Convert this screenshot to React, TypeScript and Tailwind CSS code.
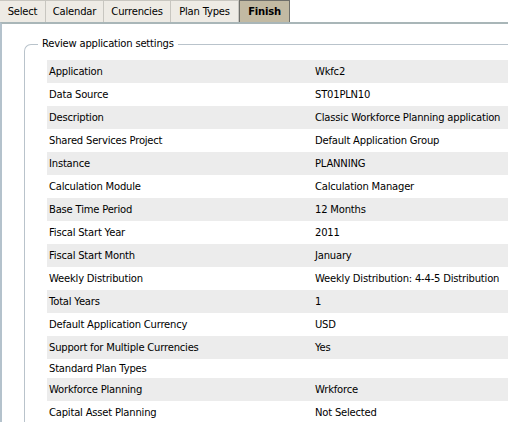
const tabs = [
  { label: 'Select', w: 'w-[46px]' },
  { label: 'Calendar', w: 'w-[58px]' },
  { label: 'Currencies', w: 'w-[67px]' },
  { label: 'Plan Types', w: 'w-[68px]' },
];

type Row = { label: string; value: string; short?: boolean };

const rows: Row[] = [
  { label: 'Application', value: 'Wkfc2' },
  { label: 'Data Source', value: 'ST01PLN10' },
  { label: 'Description', value: 'Classic Workforce Planning application' },
  { label: 'Shared Services Project', value: 'Default Application Group' },
  { label: 'Instance', value: 'PLANNING' },
  { label: 'Calculation Module', value: 'Calculation Manager' },
  { label: 'Base Time Period', value: '12 Months' },
  { label: 'Fiscal Start Year', value: '2011' },
  { label: 'Fiscal Start Month', value: 'January' },
  { label: 'Weekly Distribution', value: 'Weekly Distribution: 4-4-5 Distribution' },
  { label: 'Total Years', value: '1' },
  { label: 'Default Application Currency', value: 'USD' },
  { label: 'Support for Multiple Currencies', value: 'Yes' },
  { label: 'Standard Plan Types', value: '', short: true },
  { label: 'Workforce Planning', value: 'Wrkforce' },
  { label: 'Capital Asset Planning', value: 'Not Selected' },
];

export default function App() {
  return (
    <div className="h-[422px] w-[508px] overflow-hidden bg-white text-[10px] tracking-[-0.2px] text-black [font-family:'DejaVu_Sans',sans-serif]">
      <div className="flex h-[22px]">
        {tabs.map((t) => (
          <div
            key={t.label}
            className={`${t.w} flex items-center justify-center border-r border-t border-[#c8c6c0] bg-[#eeebe5]`}
          >
            {t.label}
          </div>
        ))}
        <div className="flex w-[51px] items-center justify-center border border-b-0 border-[#6f6f6a] bg-[#c2baa3] font-bold">
          Finish
        </div>
      </div>
      <div className="h-full border-l-2 border-t-2 border-l-[#b4c2cc] border-t-[#a9b6b8] pl-[22px] pt-[13px]">
        <fieldset className="rounded-tl-[7px] border-l border-t border-[#b9c3cb] pl-[22px] pt-[9px]">
          <legend className="-ml-[9px] px-[4px] leading-[14px]">Review application settings</legend>
          {rows.map((r, i) => (
            <div
              key={r.label}
              className={`grid grid-cols-[266px_1fr] items-center whitespace-nowrap pl-[2px] ${r.short ? 'h-[19px]' : 'h-[23px]'} ${i % 2 === 0 ? 'bg-[#ececec]' : 'bg-white'}`}
            >
              <span>{r.label}</span>
              <span>{r.value}</span>
            </div>
          ))}
        </fieldset>
      </div>
    </div>
  );
}
